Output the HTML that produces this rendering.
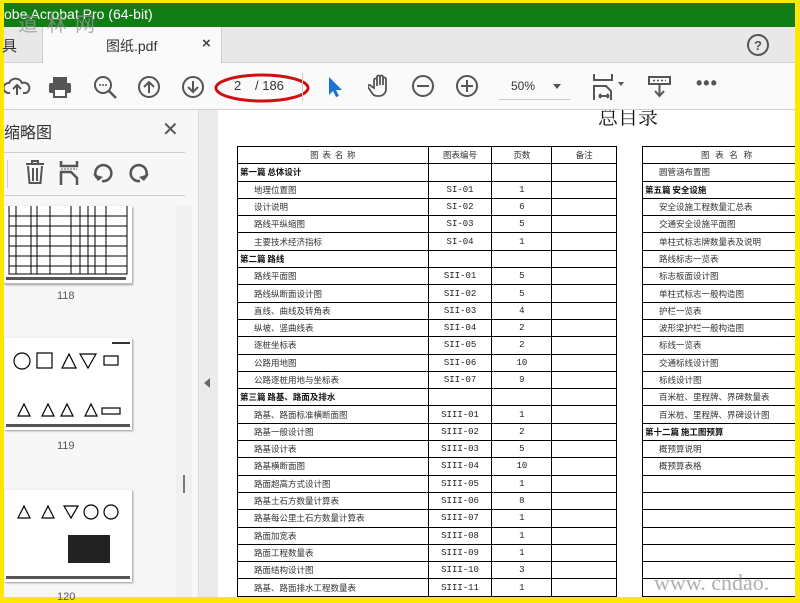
<!DOCTYPE html><html><head><meta charset="utf-8"><style>
*{margin:0;padding:0;box-sizing:border-box}
body{width:800px;height:600px;overflow:hidden;background:#ffe800;font-family:"Liberation Sans","Noto Sans CJK SC",sans-serif;position:relative}
.a{position:absolute}
#title{left:4px;top:3px;width:791px;height:24px;background:#127d14;color:#fff;font-size:14px;line-height:22px;padding-left:0}
#tabs{left:4px;top:27px;width:791px;height:36px;background:#e8e8e8;border-bottom:1px solid #d0d0d0}
#tb{left:4px;top:63px;width:791px;height:47px;background:#fafafa;border-bottom:1px solid #d0d0d0}
#lp{left:4px;top:110px;width:194px;height:487px;background:#f7f7f7}
#div{left:198px;top:110px;width:20px;height:487px;background:#ebebeb;border-left:1px solid #ddd}
#doc{left:218px;top:110px;width:577px;height:487px;background:#fff;overflow:hidden}
table{border-collapse:collapse;position:absolute;font-family:"Noto Sans CJK SC",sans-serif;font-size:8.5px;color:#333}
td{border:1px solid #000;height:17.3px;padding:0;white-space:nowrap;line-height:10px}
td.c{text-align:center}
td.m{text-align:center;font-family:"Liberation Mono",monospace;font-size:9px;color:#222}
td.i{padding-left:16px}
td.b{font-weight:bold;padding-left:2px;color:#111}
svg{position:absolute}
</style></head><body>
<div id="title" class="a">obe Acrobat Pro (64-bit)</div>
<div id="tabs" class="a">
 <div class="a" style="left:-2px;top:8px;font-size:15px;color:#333">具</div>
 <div class="a" style="left:38px;top:0;width:180px;height:36px;background:#fafafa;border-left:1px solid #ccc;border-right:1px solid #ccc"></div>
 <div class="a" style="left:102px;top:9px;font-size:14px;color:#333">图纸.pdf</div>
 <div class="a" style="left:198px;top:8px;font-size:15px;color:#444;font-weight:bold">×</div>
 <svg style="left:742px;top:6px" width="24" height="24"><circle cx="12" cy="12" r="10" fill="none" stroke="#555" stroke-width="2"/><text x="12" y="17" font-size="13" text-anchor="middle" fill="#555" font-family="Liberation Sans" font-weight="bold">?</text></svg>
</div>
<div class="a" style="left:18px;top:8px;z-index:5;font-size:20px;color:rgba(150,150,150,.75);font-family:'Noto Sans CJK SC',sans-serif;letter-spacing:2px">道 林 网</div>
<div id="tb" class="a">
 <svg style="left:0;top:12px" width="30" height="24"><path d="M6 18 h-2 a5 5 0 0 1 1-10 a7 7 0 0 1 13 0 a5 5 0 0 1 4 10 h-3 M13 20 v-10 M9 14 l4-4 4 4" fill="none" stroke="#555" stroke-width="2"/></svg>
 <svg style="left:44px;top:12px" width="24" height="24"><rect x="5" y="2" width="14" height="6" fill="#555"/><rect x="1" y="8" width="22" height="10" rx="2" fill="#555"/><rect x="6" y="14" width="12" height="8" fill="#fff" stroke="#555" stroke-width="2"/></svg>
 <svg style="left:89px;top:12px" width="26" height="26"><circle cx="10" cy="10" r="8" fill="none" stroke="#555" stroke-width="2"/><path d="M16 16 l7 7" stroke="#555" stroke-width="2.5"/><circle cx="7" cy="10" r="1" fill="#555"/><circle cx="10" cy="10" r="1" fill="#555"/><circle cx="13" cy="10" r="1" fill="#555"/></svg>
 <svg style="left:134px;top:13px" width="24" height="24"><circle cx="11" cy="11" r="10" fill="none" stroke="#555" stroke-width="2"/><path d="M11 17 v-11 M6 11 l5-5 5 5" fill="none" stroke="#555" stroke-width="2"/></svg>
 <svg style="left:178px;top:13px" width="24" height="24"><circle cx="11" cy="11" r="10" fill="none" stroke="#555" stroke-width="2"/><path d="M11 5 v11 M6 11 l5 5 5-5" fill="none" stroke="#555" stroke-width="2"/></svg>
 <div class="a" style="left:230px;top:15px;font-size:13px;color:#333">2</div>
 <div class="a" style="left:251px;top:15px;font-size:13px;color:#333">/ 186</div>
 <svg style="left:208px;top:8px" width="100" height="34"><ellipse cx="50" cy="17" rx="46" ry="13" fill="none" stroke="#d01010" stroke-width="3"/></svg>
 <div class="a" style="left:298px;top:10px;width:1px;height:28px;background:#ccc"></div>
 <svg style="left:320px;top:12px" width="20" height="24"><path d="M5 2 v18 l4-4 3 6 3-1-3-6 6 0z" fill="#1b73d3"/></svg>
 <svg style="left:364px;top:11px" width="26" height="26"><path d="M6 14 v-8 a1.5 1.5 0 0 1 3 0 v6 v-9 a1.5 1.5 0 0 1 3 0 v8 v-8 a1.5 1.5 0 0 1 3 0 v8 v-6 a1.5 1.5 0 0 1 3 0 v10 a7 7 0 0 1-7 7 h-2 a6 6 0 0 1-5-3 l-4-6 a1.5 1.5 0 0 1 3-1z" fill="none" stroke="#555" stroke-width="1.8"/></svg>
 <svg style="left:408px;top:12px" width="24" height="24"><circle cx="11" cy="11" r="10" fill="none" stroke="#555" stroke-width="2"/><path d="M5 11 h12" stroke="#555" stroke-width="2"/></svg>
 <svg style="left:452px;top:12px" width="24" height="24"><circle cx="11" cy="11" r="10" fill="none" stroke="#555" stroke-width="2"/><path d="M5 11 h12 M11 5 v12" stroke="#555" stroke-width="2"/></svg>
 <div class="a" style="left:507px;top:16px;font-size:12px;color:#333">50%</div>
 <div class="a" style="left:549px;top:21px;border:4px solid transparent;border-top:5px solid #555"></div>
 <div class="a" style="left:495px;top:36px;width:71px;height:1px;background:#ccc"></div>
 <svg style="left:588px;top:11px" width="36" height="28"><path d="M2 0 v6 h18 v-6 M2 26 v-14 h12 l5 5 v9 M7 22 h10 M7 22 l2-2 M7 22 l2 2 M17 22 l-2-2 M17 22 l-2 2" fill="none" stroke="#555" stroke-width="2"/><path d="M26 8 l3 4 3-4z" fill="#555"/></svg>
 <svg style="left:644px;top:12px" width="24" height="24"><rect x="1" y="2" width="21" height="7" fill="none" stroke="#555" stroke-width="2"/><path d="M5 5.5h2M9 5.5h2M13 5.5h2M17 5.5h1" stroke="#555" stroke-width="1.5"/><path d="M11.5 9 v12 M7 16 l4.5 5 4.5-5" fill="none" stroke="#555" stroke-width="2"/></svg>
 <div class="a" style="left:692px;top:10px;font-size:18px;color:#555;letter-spacing:1px;font-weight:bold">•••</div>
</div>
<div id="lp" class="a">
 <div class="a" style="left:0;top:9px;font-size:16px;color:#333">缩略图</div>
 <div class="a" style="left:158px;top:7px;font-size:20px;color:#555">✕</div>
 <div class="a" style="left:0;top:42px;width:181px;height:1px;background:#ccc"></div>
 <div class="a" style="left:0;top:85px;width:181px;height:1px;background:#ccc"></div>
 <div class="a" style="left:3px;top:50px;width:1px;height:28px;background:#ccc"></div>
 <svg style="left:20px;top:50px" width="24" height="26"><path d="M2 4 h18 M8 4 v-3 h6 v3 M4 6 l1.5 17 h11 l1.5-17 M9 8 v13 M13 8 v13" fill="none" stroke="#555" stroke-width="2"/></svg>
 <svg style="left:55px;top:50px" width="22" height="26"><path d="M2 1 v5 h16 v-5 M2 25 v-13 h10 l6 6 v7" fill="none" stroke="#555" stroke-width="2.5"/><path d="M2 9 h16" stroke="#555" stroke-dasharray="2 1"/></svg>
 <svg style="left:88px;top:50px" width="24" height="26"><path d="M5 18 a8 8 0 1 1 5 3" fill="none" stroke="#555" stroke-width="2.5"/><path d="M1 14 l5 7 5-4z" fill="#555"/></svg>
 <svg style="left:122px;top:50px" width="24" height="26"><path d="M19 18 a8 8 0 1 0 -5 3" fill="none" stroke="#555" stroke-width="2.5"/><path d="M23 14 l-5 7 -5-4z" fill="#555"/></svg>
 <div class="a" style="left:172px;top:96px;width:16px;height:391px;background:#f0f0f0"></div>
 <div class="a" style="left:179px;top:365px;width:2px;height:18px;background:#777"></div>
 <div class="a" style="left:0;top:96px;width:128px;height:78px;background:#fff;box-shadow:1px 1px 2px #999;border-bottom:1px solid #bbb">
  <svg width="128" height="78"><g stroke="#000" fill="none"><path d="M5 0 v68 h118 v-68 M5 10 h118 M5 20h118 M5 30h118 M5 40h118 M5 50h118 M5 60h118 M12 0v68 M27 0v68 M33 0v68 M46 0v68 M67 0v68 M76 0v68 M84 0v68 M91 0v68 M102 0v68"/></g><rect x="2" y="71" width="120" height="3" fill="#555"/></svg>
 </div>
 <div class="a" style="left:53px;top:180px;font-size:11px;color:#555">118</div>
 <div class="a" style="left:0;top:228px;width:128px;height:92px;background:#fff;box-shadow:1px 1px 2px #999">
  <svg width="128" height="92"><g stroke="#000" fill="none" stroke-width="1.2"><circle cx="18" cy="23" r="8"/><rect x="33" y="15" width="15" height="15"/><path d="M58 30 l7-14 7 14z M76 16 h16 l-8 14z"/><rect x="100" y="18" width="14" height="9"/><path d="M14 78 l6-12 6 12z M38 78 l6-12 6 12z M57 78 l6-12 6 12z M81 78 l6-12 6 12z"/><rect x="98" y="70" width="18" height="6"/></g><rect x="2" y="86" width="124" height="3" fill="#555"/><rect x="108" y="4" width="18" height="2" fill="#333"/></svg>
 </div>
 <div class="a" style="left:53px;top:330px;font-size:11px;color:#555">119</div>
 <div class="a" style="left:0;top:380px;width:128px;height:92px;background:#fff;box-shadow:1px 1px 2px #999">
  <svg width="128" height="92"><g stroke="#000" fill="none" stroke-width="1.2"><path d="M14 28 l6-12 6 12z M38 28 l6-12 6 12z M60 16 h14 l-7 12z"/><circle cx="87" cy="22" r="7"/><circle cx="107" cy="22" r="7"/></g><rect x="64" y="45" width="42" height="28" fill="#222"/><rect x="2" y="86" width="124" height="3" fill="#555"/></svg>
 </div>
 <div class="a" style="left:53px;top:481px;font-size:11px;color:#555">120</div>
</div>
<div id="div" class="a"><div class="a" style="left:5px;top:268px;border:5px solid transparent;border-right:6px solid #666;border-left:0"></div></div>
<div id="doc" class="a">
 <div class="a" style="left:380px;top:-9px;font-size:20px;font-family:'Noto Serif CJK SC',serif;color:#111">总目录</div>
 <table style="left:19px;top:36px;width:380px"><colgroup><col style="width:191px"><col style="width:64px"><col style="width:60px"><col style="width:65px"></colgroup>
 <tr><td class="c">图 &nbsp;表 &nbsp;名 &nbsp;称</td><td class="c">图表编号</td><td class="c">页数</td><td class="c">备注</td></tr>
 <tr><td class="b">第一篇 总体设计</td><td></td><td></td><td></td></tr>
 <tr><td class="i">地理位置图</td><td class="m">SI-01</td><td class="m">1</td><td></td></tr>
 <tr><td class="i">设计说明</td><td class="m">SI-02</td><td class="m">6</td><td></td></tr>
 <tr><td class="i">路线平纵缩图</td><td class="m">SI-03</td><td class="m">5</td><td></td></tr>
 <tr><td class="i">主要技术经济指标</td><td class="m">SI-04</td><td class="m">1</td><td></td></tr>
 <tr><td class="b">第二篇 路线</td><td></td><td></td><td></td></tr>
 <tr><td class="i">路线平面图</td><td class="m">SII-01</td><td class="m">5</td><td></td></tr>
 <tr><td class="i">路线纵断面设计图</td><td class="m">SII-02</td><td class="m">5</td><td></td></tr>
 <tr><td class="i">直线、曲线及转角表</td><td class="m">SII-03</td><td class="m">4</td><td></td></tr>
 <tr><td class="i">纵坡、竖曲线表</td><td class="m">SII-04</td><td class="m">2</td><td></td></tr>
 <tr><td class="i">逐桩坐标表</td><td class="m">SII-05</td><td class="m">2</td><td></td></tr>
 <tr><td class="i">公路用地图</td><td class="m">SII-06</td><td class="m">10</td><td></td></tr>
 <tr><td class="i">公路逐桩用地与坐标表</td><td class="m">SII-07</td><td class="m">9</td><td></td></tr>
 <tr><td class="b">第三篇 路基、路面及排水</td><td></td><td></td><td></td></tr>
 <tr><td class="i">路基、路面标准横断面图</td><td class="m">SIII-01</td><td class="m">1</td><td></td></tr>
 <tr><td class="i">路基一般设计图</td><td class="m">SIII-02</td><td class="m">2</td><td></td></tr>
 <tr><td class="i">路基设计表</td><td class="m">SIII-03</td><td class="m">5</td><td></td></tr>
 <tr><td class="i">路基横断面图</td><td class="m">SIII-04</td><td class="m">10</td><td></td></tr>
 <tr><td class="i">路面超高方式设计图</td><td class="m">SIII-05</td><td class="m">1</td><td></td></tr>
 <tr><td class="i">路基土石方数量计算表</td><td class="m">SIII-06</td><td class="m">8</td><td></td></tr>
 <tr><td class="i">路基每公里土石方数量计算表</td><td class="m">SIII-07</td><td class="m">1</td><td></td></tr>
 <tr><td class="i">路面加宽表</td><td class="m">SIII-08</td><td class="m">1</td><td></td></tr>
 <tr><td class="i">路面工程数量表</td><td class="m">SIII-09</td><td class="m">1</td><td></td></tr>
 <tr><td class="i">路面结构设计图</td><td class="m">SIII-10</td><td class="m">3</td><td></td></tr>
 <tr><td class="i">路基、路面排水工程数量表</td><td class="m">SIII-11</td><td class="m">1</td><td></td></tr>
 </table>
 <table style="left:424px;top:36px;width:170px"><colgroup><col style="width:170px"></colgroup>
 <tr><td style="padding-left:58px">图 &nbsp; 表 &nbsp; 名 &nbsp; 称</td></tr>
 <tr><td class="i">圆管涵布置图</td></tr>
 <tr><td class="b">第五篇 安全设施</td></tr>
 <tr><td class="i">安全设施工程数量汇总表</td></tr>
 <tr><td class="i">交通安全设施平面图</td></tr>
 <tr><td class="i">单柱式标志牌数量表及说明</td></tr>
 <tr><td class="i">路线标志一览表</td></tr>
 <tr><td class="i">标志板面设计图</td></tr>
 <tr><td class="i">单柱式标志一般构造图</td></tr>
 <tr><td class="i">护栏一览表</td></tr>
 <tr><td class="i">波形梁护栏一般构造图</td></tr>
 <tr><td class="i">标线一览表</td></tr>
 <tr><td class="i">交通标线设计图</td></tr>
 <tr><td class="i">标线设计图</td></tr>
 <tr><td class="i">百米桩、里程牌、界碑数量表</td></tr>
 <tr><td class="i">百米桩、里程牌、界碑设计图</td></tr>
 <tr><td class="b">第十二篇 施工图预算</td></tr>
 <tr><td class="i">概预算说明</td></tr>
 <tr><td class="i">概预算表格</td></tr>
 <tr><td></td></tr><tr><td></td></tr><tr><td></td></tr><tr><td></td></tr><tr><td></td></tr><tr><td></td></tr><tr><td></td></tr>
 </table>
 <div class="a" style="left:436px;top:460px;font-size:22px;font-family:'Liberation Serif',serif;color:rgba(120,120,120,.6)">www. cndao. com</div>
</div>
</body></html>
